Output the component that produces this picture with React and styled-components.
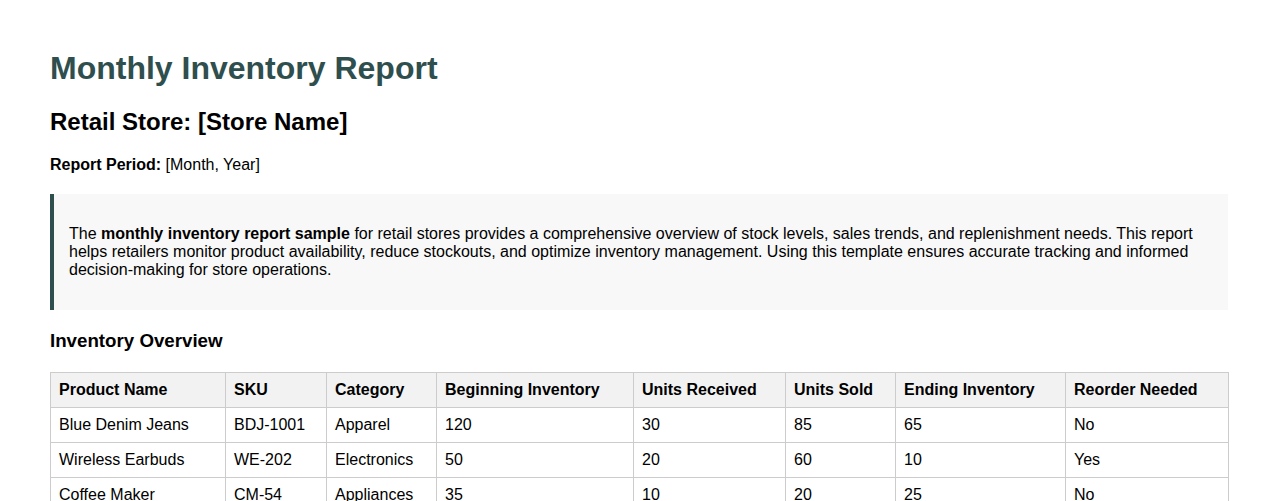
import React from "react";
import styled, { createGlobalStyle } from "styled-components";

const GlobalStyle = createGlobalStyle`
  body {
    margin: 0;
    padding: 29px 50px 50px;
    font-family: "Liberation Sans", Arial, sans-serif;
    color: #000;
    background: #fff;
  }
`;

const Title = styled.h1`
  font-size: 32px;
  color: #2f4f4f;
  margin: 21px 0;
`;

const StoreName = styled.h2`
  font-size: 24px;
  margin: 20px 0;
`;

const Period = styled.p`
  font-size: 16px;
  margin: 16px 0;
`;

const Intro = styled.div`
  background: #f8f8f8;
  border-left: 4px solid #2f4f4f;
  padding: 15px;
  margin: 20px 0;

  p {
    margin: 16px 0;
    font-size: 16px;
    line-height: 18px;
  }
`;

const SectionTitle = styled.h3`
  font-size: 18.72px;
  margin: 18.72px 0 19.8px;
`;

const Table = styled.table`
  width: 100%;
  border-collapse: collapse;
  table-layout: fixed;
  font-size: 16px;

  th,
  td {
    border: 1px solid #ccc;
    padding: 8px;
    text-align: left;
    white-space: nowrap;
  }

  th {
    background: #f2f2f2;
    font-weight: bold;
  }
`;

const Col = styled.col`
  width: ${(p) => p.$w}px;
`;

const columns = [
  ["Product Name", 175],
  ["SKU", 101],
  ["Category", 110],
  ["Beginning Inventory", 197],
  ["Units Received", 152],
  ["Units Sold", 110],
  ["Ending Inventory", 170],
  ["Reorder Needed", 163],
];

const rows = [
  ["Blue Denim Jeans", "BDJ-1001", "Apparel", "120", "30", "85", "65", "No"],
  ["Wireless Earbuds", "WE-202", "Electronics", "50", "20", "60", "10", "Yes"],
  ["Coffee Maker", "CM-54", "Appliances", "35", "10", "20", "25", "No"],
];

export default function App() {
  return (
    <>
      <GlobalStyle />
      <Title>Monthly Inventory Report</Title>
      <StoreName>Retail Store: [Store Name]</StoreName>
      <Period>
        <strong>Report Period:</strong> [Month, Year]
      </Period>
      <Intro>
        <p>
          The <strong>monthly inventory report sample</strong> for retail stores
          provides a comprehensive overview of stock levels, sales trends, and
          replenishment needs. This report helps retailers monitor product
          availability, reduce stockouts, and optimize inventory management.
          Using this template ensures accurate tracking and informed
          decision-making for store operations.
        </p>
      </Intro>
      <SectionTitle>Inventory Overview</SectionTitle>
      <Table>
        <colgroup>
          {columns.map(([c, w]) => (
            <Col key={c} $w={w} />
          ))}
        </colgroup>
        <thead>
          <tr>
            {columns.map(([c]) => (
              <th key={c}>{c}</th>
            ))}
          </tr>
        </thead>
        <tbody>
          {rows.map((r) => (
            <tr key={r[1]}>
              {r.map((v, i) => (
                <td key={i}>{v}</td>
              ))}
            </tr>
          ))}
        </tbody>
      </Table>
    </>
  );
}
